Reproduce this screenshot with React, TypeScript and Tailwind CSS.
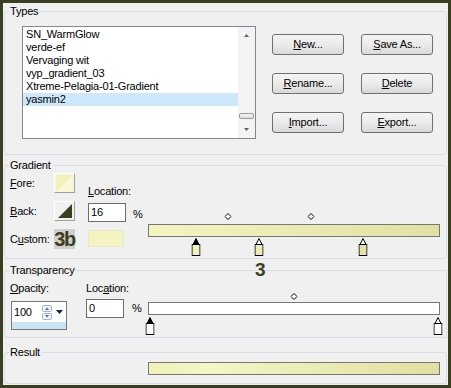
import type { ReactNode } from "react";

const listItems = [
  "SN_WarmGlow",
  "verde-ef",
  "Vervaging wit",
  "vyp_gradient_03",
  "Xtreme-Pelagia-01-Gradient",
  "yasmin2",
];

const buttons = [
  { k: "N", rest: "ew..." },
  { k: "S", rest: "ave As..." },
  { k: "R", rest: "ename..." },
  { k: "D", rest: "elete" },
  { k: "I", rest: "mport..." },
  { k: "E", rest: "xport..." },
];

// stop / midpoint positions along the bar, in percent
const gradientStops = [
  { at: 16, selected: true, fill: "#f1f1bd" },
  { at: 38, selected: false, fill: "#ececb4" },
  { at: 74, selected: false, fill: "#e2e2a6" },
];
const gradientMids = [27, 56];
const alphaStops = [
  { at: 0, selected: true, fill: "#ffffff" },
  { at: 100, selected: false, fill: "#ffffff" },
];
const alphaMids = [50];

function Group({ title, className, children }: { title: string; className: string; children: ReactNode }) {
  return (
    <fieldset className={`border border-[#d5dfe5] rounded-[3px] mx-[1px] p-0 min-w-0 ${className}`}>
      <legend className="ml-[4px] px-[1px] h-[13px] leading-[13px]">{title}</legend>
      {children}
    </fieldset>
  );
}

function Btn({ k, rest }: { k: string; rest: string }) {
  return (
    <div className="w-[72px] h-[21px] rounded-[3px] border border-[#707070] bg-linear-to-b from-[#f4f4f4] via-[#ebebeb] to-[#d9d9d9] flex items-center justify-center">
      <span>
        <u>{k}</u>
        {rest}
      </span>
    </div>
  );
}

function StopMarker({ selected, fill }: { selected: boolean; fill: string }) {
  return (
    <svg width="9" height="19" viewBox="0 0 9 19">
      <path d="M4.5 0.5 L7.5 6.5 L1.5 6.5 Z" fill={selected ? "#000" : "#fff"} stroke="#000" />
      <rect x="0.5" y="6.5" width="8" height="11" fill={fill} stroke="#000" />
    </svg>
  );
}

function Diamond() {
  return (
    <svg width="7" height="7" viewBox="0 0 7 7">
      <path d="M3.5 0.5 L6.5 3.5 L3.5 6.5 L0.5 3.5 Z" fill="#fff" stroke="#000" />
    </svg>
  );
}

function Track({ children, className }: { children: ReactNode; className: string }) {
  return <div className={`relative w-[288px] ml-[2px] ${className}`}>{children}</div>;
}

export default function App() {
  return (
    <div className="relative w-[451px] h-[388px] border-[3px] border-[#3b3f22] bg-[#f0f0f0] overflow-hidden text-[11px] tracking-[-0.2px] text-black font-['Liberation_Sans',Arial,sans-serif]">
      <div className="flex flex-col pt-[2px]">
        {/* Types */}
        <Group title="Types" className="h-[150px]">
          <div className="flex">
            <div className="ml-[17px] mt-[8px] w-[234px] h-[113px] border border-[#828790] bg-white flex">
              <div className="flex-1 pt-[1px]">
                {listItems.map((item) => (
                  <div
                    key={item}
                    className={`h-[13px] leading-[13px] pl-[3px] whitespace-nowrap ${item === "yasmin2" ? "bg-[#cce8fa]" : ""}`}
                  >
                    {item}
                  </div>
                ))}
              </div>
              <div className="w-[17px] bg-[#f3f3f3] flex flex-col">
                <div className="h-[17px] flex items-center justify-center">
                  <svg width="5" height="3" viewBox="0 0 5 3">
                    <path d="M2.5 0 L5 3 L0 3 Z" fill="#606060" />
                  </svg>
                </div>
                <div className="flex-1 flex flex-col justify-end items-center pb-[2px]">
                  <div className="w-[15px] h-[6px] rounded-[2px] border border-[#9a9a9a] bg-linear-to-b from-[#f7f7f7] to-[#dcdcdc]" />
                </div>
                <div className="h-[17px] flex items-center justify-center">
                  <svg width="5" height="3" viewBox="0 0 5 3">
                    <path d="M0 0 L5 0 L2.5 3 Z" fill="#606060" />
                  </svg>
                </div>
              </div>
            </div>
            <div className="ml-[16px] mt-[16px] grid grid-cols-2 gap-x-[17px] gap-y-[18px] h-max">
              {buttons.map((b) => (
                <Btn key={b.k} k={b.k} rest={b.rest} />
              ))}
            </div>
          </div>
        </Group>

        {/* Gradient */}
        <Group title="Gradient" className="h-[100px] mt-[4px]">
          <div className="flex">
            <div className="w-[83px] mt-[1px] flex flex-col gap-[8px]">
              <div className="flex items-center h-[20px]">
                <span className="w-[49px] pl-[5px]">
                  <u>F</u>ore:
                </span>
                <div className="w-[21px] h-[20px] border border-t-white border-l-white border-r-[#a0a0a0] border-b-[#a0a0a0] bg-[#f7f7d8]">
                  <svg width="19" height="18" viewBox="0 0 19 18">
                    <path d="M1 1 L18 1 L1 17 Z" fill="#f1f1bc" />
                  </svg>
                </div>
              </div>
              <div className="flex items-center h-[20px]">
                <span className="w-[49px] pl-[5px]">
                  <u>B</u>ack:
                </span>
                <div className="w-[21px] h-[20px] border border-t-white border-l-white border-r-[#a0a0a0] border-b-[#a0a0a0] bg-[#f0f0f0]">
                  <svg width="19" height="18" viewBox="0 0 19 18">
                    <path d="M17 2 L17 16 L3 16 Z" fill="#3b3f1f" />
                  </svg>
                </div>
              </div>
              <div className="flex items-center h-[20px]">
                <span className="w-[49px] pl-[5px]">
                  C<u>u</u>stom:
                </span>
                <div className="w-[21px] h-[20px] bg-[#cfcfcf] flex items-center justify-center overflow-visible">
                  <span className="text-[20px] leading-none font-bold tracking-[-1.5px] text-[#3b3f22]">3b</span>
                </div>
              </div>
            </div>
            <div className="w-[60px] flex flex-col">
              <div className="mt-[13px] h-[13px] leading-[13px]">
                <u>L</u>ocation:
              </div>
              <div className="mt-[5px] flex">
                <div className="w-[38px] h-[19px] border border-[#6e6e6e] bg-white pl-[2px] leading-[17px]">16</div>
                <span className="ml-[7px] mt-[5px] leading-[13px]">%</span>
              </div>
              <div className="mt-[8px] w-[36px] h-[17px] border border-[#e8e8cc] bg-[#f4f4c2]" />
            </div>
            <div className="flex flex-col">
              <Track className="mt-[41px] h-[7px]">
                {gradientMids.map((m) => (
                  <div key={m} className="absolute top-0 -translate-x-1/2 flex" style={{ left: `${m}%` }}>
                    <Diamond />
                  </div>
                ))}
              </Track>
              <div className="mt-[4px] w-[292px] h-[13px] border border-[#777777] bg-linear-to-r from-[#f4f4c2] to-[#e1e1a4]" />
              <Track className="mt-[1px] h-[19px]">
                {gradientStops.map((s) => (
                  <div key={s.at} className="absolute top-0 -translate-x-1/2 flex" style={{ left: `${s.at}%` }}>
                    <StopMarker selected={s.selected} fill={s.fill} />
                  </div>
                ))}
              </Track>
            </div>
          </div>
        </Group>

        {/* Transparency */}
        <Group title="Transparency" className="h-[74px] mt-[5px]">
          <div className="flex">
            <div className="w-[81px] flex flex-col">
              <div className="mt-[5px] h-[13px] leading-[13px] pl-[5px]">
                <u>O</u>pacity:
              </div>
              <div className="ml-[6px] mt-[6px] w-[56px] h-[29px] border border-[#7a7a7a] bg-white flex flex-col">
                <div className="h-[20px] flex items-center">
                  <span className="w-[30px] pl-[2px] leading-[13px]">100</span>
                  <svg width="10" height="15" viewBox="0 0 10 15">
                    <rect x="0.5" y="0.5" width="9" height="6" rx="1" fill="#eef2f8" stroke="#a7b4c6" />
                    <path d="M3 5 L5 2.5 L7 5 Z" fill="#4a6aa8" />
                    <rect x="0.5" y="8.5" width="9" height="6" rx="1" fill="#eef2f8" stroke="#a7b4c6" />
                    <path d="M3 10 L7 10 L5 12.5 Z" fill="#4a6aa8" />
                  </svg>
                  <svg className="ml-[4px]" width="7" height="4" viewBox="0 0 7 4">
                    <path d="M0 0 L7 0 L3.5 4 Z" fill="#14205e" />
                  </svg>
                </div>
                <div className="flex-1 bg-[#c8e4f6]" />
              </div>
            </div>
            <div className="w-[62px] flex flex-col">
              <div className="mt-[5px] h-[13px] leading-[13px]">
                Loc<u>a</u>tion:
              </div>
              <div className="mt-[4px] flex">
                <div className="w-[38px] h-[19px] border border-[#6e6e6e] bg-white pl-[2px] leading-[17px]">0</div>
                <span className="ml-[8px] mt-[3px] leading-[13px]">%</span>
              </div>
            </div>
            <div className="flex flex-col">
              <Track className="mt-[16px] h-[7px]">
                {alphaMids.map((m) => (
                  <div key={m} className="absolute top-0 -translate-x-1/2 flex" style={{ left: `${m}%` }}>
                    <Diamond />
                  </div>
                ))}
              </Track>
              <div className="mt-[2px] w-[292px] h-[13px] border border-[#777777] bg-white" />
              <Track className="mt-[2px] h-[19px]">
                {alphaStops.map((s) => (
                  <div key={s.at} className="absolute top-0 -translate-x-1/2 flex" style={{ left: `${s.at}%` }}>
                    <StopMarker selected={s.selected} fill={s.fill} />
                  </div>
                ))}
              </Track>
            </div>
          </div>
        </Group>

        {/* Result */}
        <Group title="Result" className="h-[38px] mt-[8px]">
          <div className="ml-[143px] mt-[3px] w-[292px] h-[13px] border border-[#777777] bg-linear-to-r from-[#f0f0b8] via-[#f5f5c6] via-20% to-[#e0e0a2]" />
        </Group>
      </div>

      {/* tutorial annotation */}
      <span className="absolute left-[252px] top-[257px] text-[19px] leading-none font-bold text-[#3b3f22]">3</span>
    </div>
  );
}
